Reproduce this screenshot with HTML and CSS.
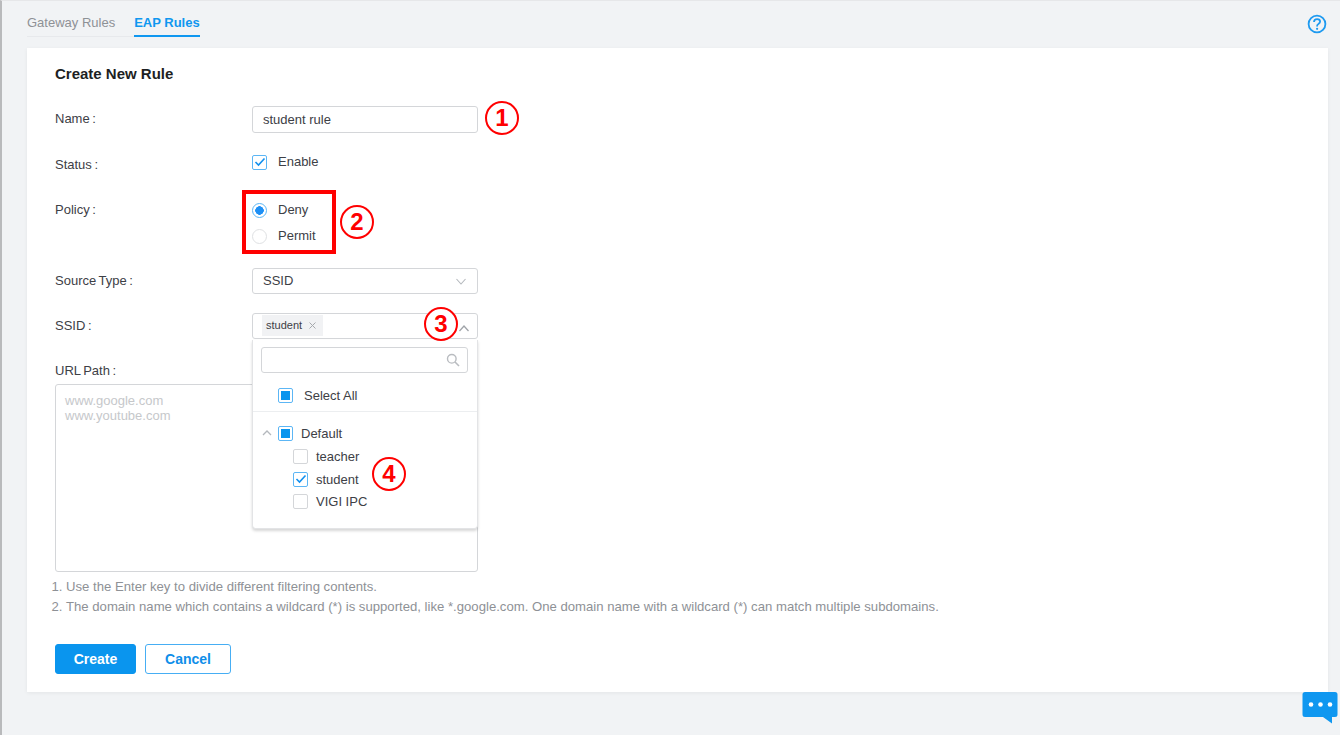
FILE: index.html
```html
<!DOCTYPE html>
<html lang="en">
<head>
<meta charset="utf-8">
<title>EAP Rules</title>
<link rel="stylesheet" href="styles.css">
</head>
<body>
<div class="page">
  <header class="tabbar">
    <nav class="tabs">
      <span class="tab">Gateway Rules</span>
      <span class="tab tab-active">EAP Rules</span>
    </nav>
    <svg class="help" width="20" height="20" viewBox="0 0 20 20"><circle cx="10" cy="10" r="8.400" fill="none" stroke="#1e9af0" stroke-width="1.800"/><path d="M7 8c0-1.700 1.300-2.900 3.100-2.900 1.700 0 3 1 3 2.500 0 1.200-.7 1.800-1.700 2.400-.9.5-1.300 1-1.300 1.900v.5" fill="none" stroke="#1e9af0" stroke-width="1.800"/><circle cx="10.100" cy="14.800" r="1.100" fill="#1e9af0"/></svg>
  </header>
  <main class="card">
    <h1 class="title">Create New Rule</h1>
    <div class="row row-name">
      <label class="label">Name :</label>
      <div class="input">student rule</div>
    </div>
    <div class="row row-status">
      <label class="label label-status">Status :</label>
      <div class="option">
        <span class="box box-on"><svg width="12" height="10" viewBox="0 0 12 10"><path d="M1.500 5l3 3 6-6.500" fill="none" stroke="#1390ee" stroke-width="1.600"/></svg></span>
        <span>Enable</span>
      </div>
    </div>
    <div class="row row-policy">
      <label class="label">Policy :</label>
      <div class="radios">
        <div class="option"><span class="radio radio-on"></span><span>Deny</span></div>
        <div class="option"><span class="radio"></span><span>Permit</span></div>
      </div>
    </div>
    <div class="row row-source">
      <label class="label">Source Type :</label>
      <div class="input select">SSID
        <svg class="chev" width="10" height="7" viewBox="0 0 10 7"><path d="M.5 1l4.500 5 4.500-5" fill="none" stroke="#b4b8bd" stroke-width="1.100"/></svg>
      </div>
    </div>
    <div class="row row-ssid">
      <label class="label">SSID :</label>
      <div class="input select select-tags">
        <span class="tag">student <svg class="tag-x" width="7" height="7" viewBox="0 0 7 7"><path d="M.5.5l6 6M6.500.5l-6 6" stroke="#a6a9ad" stroke-width="1"/></svg></span>
        <svg class="chev chev-up" width="10" height="7" viewBox="0 0 10 7"><path d="M.5 6l4.500-5 4.500 5" fill="none" stroke="#a0a4a9" stroke-width="1.300"/></svg>
      </div>
    </div>
    <div class="url">
      <label class="label url-label">URL Path :</label>
      <div class="textarea">www.google.com<br>www.youtube.com</div>
    </div>
    <ol class="hints">
      <li>Use the Enter key to divide different filtering contents.</li>
      <li>The domain name which contains a wildcard (*) is supported, like *.google.com. One domain name with a wildcard (*) can match multiple subdomains.</li>
    </ol>
    <div class="actions">
      <button class="btn btn-primary">Create</button>
      <button class="btn btn-ghost">Cancel</button>
    </div>

    <div class="dropdown">
      <div class="search">
        <svg width="14" height="14" viewBox="0 0 14 14"><circle cx="5.800" cy="5.800" r="4.300" fill="none" stroke="#b9bcc0" stroke-width="1.400"/><path d="M9 9l4 4" stroke="#b9bcc0" stroke-width="1.600"/></svg>
      </div>
      <div class="all"><span class="box box-part"></span><span>Select All</span></div>
      <div class="tree">
        <div class="group">
          <svg class="tree-chev" width="10" height="6" viewBox="0 0 10 6"><path d="M1 5l4-4 4 4" fill="none" stroke="#b4b8bd" stroke-width="1.300"/></svg>
          <span class="box box-part"></span><span class="group-name">Default</span>
        </div>
        <div class="leaf"><span class="box"></span><span>teacher</span></div>
        <div class="leaf"><span class="box box-on"><svg width="12" height="10" viewBox="0 0 12 10"><path d="M1.500 5l3 3 6-6.500" fill="none" stroke="#1390ee" stroke-width="1.600"/></svg></span><span>student</span></div>
        <div class="leaf"><span class="box"></span><span>VIGI IPC</span></div>
      </div>
    </div>

    <div class="redbox"></div>
    <span class="mark mark-1">1</span>
    <span class="mark mark-2">2</span>
    <span class="mark mark-3">3</span>
    <span class="mark mark-4">4</span>
  </main>
  <svg class="chat" width="36" height="34" viewBox="0 0 36 34"><path d="M3 1h30a2.500 2.500 0 0 1 2.500 2.500v20a2.500 2.500 0 0 1-2.500 2.500h-3v6.500l-9-6.500h-18a2.500 2.500 0 0 1-2.500-2.500v-20a2.500 2.500 0 0 1 2.500-2.500z" fill="#0f97f0"/><circle cx="9" cy="13.500" r="2.300" fill="#fff"/><circle cx="18.500" cy="13.500" r="2.300" fill="#fff"/><circle cx="28" cy="13.500" r="2.300" fill="#fff"/></svg>
</div>
</body>
</html>
```
FILE: styles.css
```css
* { box-sizing: border-box; }
html, body { margin: 0; height: 100%; overflow: hidden; }
body {
  font-family: "Liberation Sans", Arial, sans-serif;
  font-size: 13px;
  color: #3d4046;
  background: #f1f3f5;
}
.page {
  position: relative;
  height: 735px;
  padding: 0 12px 0 25px;
  border-left: 2px solid #b9babc;
  border-top: 1px solid #e6e7e9;
}
.tabbar { display: flex; justify-content: space-between; height: 47px; }
.tabs { display: flex; height: 36px; gap: 19px; border-bottom: 1px solid #e7e9ec; }
.tab { padding-top: 14px; height: 36px; color: #8e9196; line-height: 16px; }
.tab-active { color: #0f97f0; font-weight: bold; border-bottom: 2px solid #0f97f0; }
.help { margin: 13px 1px 0 0; }
.card {
  position: relative;
  height: 644px;
  padding: 17px 28px 0;
  background: #fff;
  box-shadow: 0 1px 4px rgba(0, 0, 0, .06);
}
.title { margin: 0; font-size: 15px; line-height: 18px; color: #1d1f23; font-weight: bold; }
.row { display: grid; grid-template-columns: 197px 226px; align-items: start; }
.row-name { margin-top: 23px; }
.row-status { margin-top: 21px; }
.row-policy { margin-top: 29px; }
.row-source { margin-top: 24px; }
.row-ssid { margin-top: 19px; }
.label { line-height: 16px; color: #3d4046; word-spacing: -1px; }
.row-name .label { margin-top: 5px; }
.label-status { margin-top: 3px; }
.row-source .label { margin-top: 5px; }
.row-ssid .label { margin-top: 5px; }
.input {
  position: relative;
  height: 27px;
  padding: 0 10px;
  border: 1px solid #d4d6d9;
  border-radius: 3px;
  line-height: 25px;
  color: #3d4046;
}
.row-source .input { height: 26px; line-height: 24px; }
.row-ssid .input { height: 26px; }
.chev { position: absolute; right: 11px; top: 9px; }
.chev-up { right: 8px; top: 11px; }
.select-tags { padding: 1px 0 0 9px; line-height: 20px; }
.tag {
  display: inline-block;
  height: 21px;
  padding: 0 7px 0 4px;
  background: #f1f2f4;
  font-size: 11px;
  line-height: 20px;
  vertical-align: top;
}
.tag-x { margin-left: 4px; }
.option { display: flex; align-items: center; gap: 11px; height: 16px; line-height: 16px; }
.radios { display: flex; flex-direction: column; gap: 10px; }
.box {
  display: inline-flex;
  align-items: center;
  justify-content: center;
  flex: none;
  width: 15px;
  height: 15px;
  border: 1px solid #d4d6d9;
  border-radius: 2px;
  background: #fff;
}
.box-on { border-color: #5cb6f5; }
.box-part { border-color: #5cb6f5; }
.box-part::after { content: ""; width: 9px; height: 9px; background: #0a95ee; }
.radio {
  flex: none;
  width: 15px;
  height: 15px;
  border: 1px solid #dfe1e3;
  border-radius: 50%;
  background: #fff;
}
.radio-on { border-color: #5cb6f5; background: radial-gradient(circle, #1e90f5 4px, #fff 4.500px); }
.url { position: relative; margin-top: 24px; }
.url-label { display: block; }
.textarea {
  height: 188px;
  margin-top: 5px;
  width: 423px;
  padding: 8px 9px;
  border: 1px solid #d4d6d9;
  border-radius: 3px;
  color: #c6c8cb;
  line-height: 15px;
}
.hints {
  margin: 5px 0 0;
  padding: 0 0 0 11px;
  font-size: 13.150px;
  color: #8e9196;
  line-height: 20px;
  list-style-position: outside;
}
.actions { display: flex; gap: 9px; margin-top: 27px; }
.btn {
  height: 30px;
  border-radius: 3px;
  font: bold 14px "Liberation Sans", Arial, sans-serif;
  padding: 0;
}
.btn-primary { width: 81px; background: #0a95ee; border: 1px solid #0a95ee; color: #fff; }
.btn-ghost { width: 86px; background: #fff; border: 1px solid #46aef4; color: #0f8ee9; }
.dropdown {
  position: absolute;
  left: 225px;
  top: 292px;
  width: 226px;
  height: 189px;
  background: #fff;
  border: 1px solid #e3e4e6;
  border-top: 0;
  border-radius: 0 0 4px 4px;
  box-shadow: 0 2px 3px rgba(0, 0, 0, .16);
}
.search {
  display: flex;
  align-items: center;
  justify-content: flex-end;
  width: 207px;
  height: 26px;
  margin: 7px 0 0 8px;
  padding-right: 7px;
  border: 1px solid #d4d6d9;
  border-radius: 3px;
}
.all {
  display: flex;
  align-items: center;
  gap: 11px;
  height: 39px;
  padding: 6px 0 0 25px;
  border-bottom: 1px solid #eceef0;
}
.tree { padding-top: 10px; }
.group, .leaf { display: flex; align-items: center; height: 22.500px; }
.group { padding-left: 9px; gap: 6px; margin-bottom: 1px; }
.group-name { margin-left: 2px; }
.tree-chev { flex: none; }
.leaf { padding-left: 40px; gap: 8px; }
.redbox {
  position: absolute;
  left: 215px;
  top: 142px;
  width: 94px;
  height: 64px;
  border: 4px solid #f00;
}
.mark {
  position: absolute;
  display: flex;
  align-items: center;
  justify-content: center;
  width: 34px;
  height: 34px;
  border: 2px solid #f00;
  border-radius: 50%;
  background: transparent;
  color: #f00;
  font-size: 24px;
  font-weight: bold;
  line-height: 1;
}
.mark-1 { left: 458px; top: 53px; }
.mark-2 { left: 313px; top: 157px; }
.mark-3 { left: 397px; top: 259px; background: #fff; }
.mark-4 { left: 345px; top: 409px; }
.chat { position: absolute; right: 2px; bottom: 10px; }
```
